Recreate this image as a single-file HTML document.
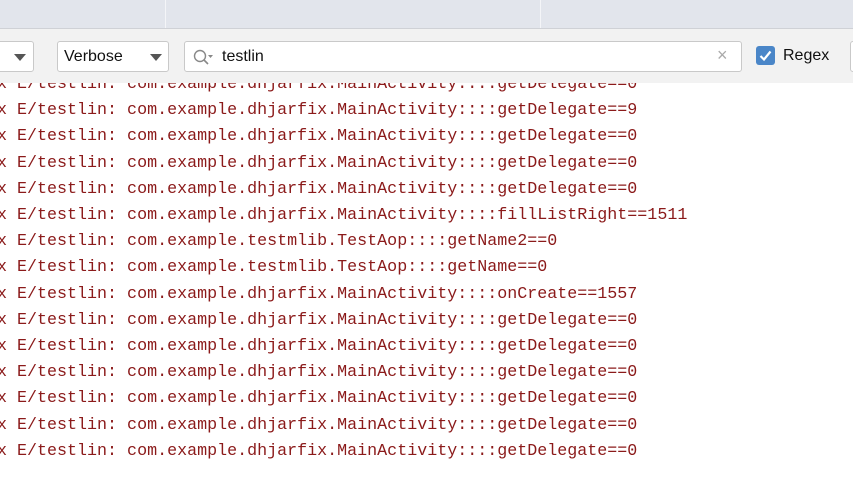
<!DOCTYPE html>
<html><head><style>
body{margin:0;width:853px;height:479px;overflow:hidden;background:#fff;position:relative;font-family:"Liberation Sans",sans-serif}
.top{position:absolute;left:0;top:0;width:853px;height:28px;background:#e2e5ec;border-bottom:1px solid #cfd1d6;z-index:2}
.top i{position:absolute;top:0;width:1px;height:28px;background:#f4f5f8}
.tb{position:absolute;left:0;top:29px;width:853px;height:54px;background:#f2f2f2;z-index:2}
.box{position:absolute;background:#fff;border:1px solid #c9c9c9;border-radius:3px;box-sizing:border-box}
.arr{position:absolute;width:0;height:0;border-left:6px solid transparent;border-right:6px solid transparent;border-top:7px solid #555}
.log{position:absolute;left:-3px;top:72px;font-family:"Liberation Mono",monospace;font-size:16.68px;line-height:26.2px;color:#8b1a1a;white-space:pre;z-index:1}
</style></head><body>
<div class="top"><i style="left:165px"></i><i style="left:540px"></i></div>
<div class="tb">
 <div class="box" style="left:-10px;top:12px;width:44px;height:31px"><div class="arr" style="left:23px;top:12px"></div></div>
 <div class="box" style="left:57px;top:12px;width:112px;height:31px"><span style="position:absolute;left:6px;top:6px;font-size:16px;color:#111">Verbose</span><div class="arr" style="left:92px;top:12px"></div></div>
 <div class="box" style="left:184px;top:12px;width:558px;height:31px">
  <svg style="position:absolute;left:7px;top:6px" width="24" height="18" viewBox="0 0 24 18"><circle cx="8" cy="8" r="5.5" fill="none" stroke="#888" stroke-width="1.4"/><line x1="12" y1="12" x2="16" y2="16" stroke="#888" stroke-width="1.6"/><path d="M16 7h5l-2.5 3z" fill="#888"/></svg>
  <span style="position:absolute;left:37px;top:6px;font-size:16px;color:#111">testlin</span>
  <span style="position:absolute;left:532px;top:3px;font-size:18px;color:#aaa">×</span>
 </div>
 <div style="position:absolute;left:756px;top:17px;width:19px;height:19px;background:#4a86c8;border-radius:3px"><svg width="19" height="19"><path d="M4.5 10l3.5 3.5 6.5-8" fill="none" stroke="#fff" stroke-width="2.2"/></svg></div>
 <span style="position:absolute;left:783px;top:18px;font-size:16px;color:#111">Regex</span>
 <div class="box" style="left:850px;top:12px;width:20px;height:31px"></div>
</div>
<div class="log">x E/testlin: com.example.dhjarfix.MainActivity::::getDelegate==0
x E/testlin: com.example.dhjarfix.MainActivity::::getDelegate==9
x E/testlin: com.example.dhjarfix.MainActivity::::getDelegate==0
x E/testlin: com.example.dhjarfix.MainActivity::::getDelegate==0
x E/testlin: com.example.dhjarfix.MainActivity::::getDelegate==0
x E/testlin: com.example.dhjarfix.MainActivity::::fillListRight==1511
x E/testlin: com.example.testmlib.TestAop::::getName2==0
x E/testlin: com.example.testmlib.TestAop::::getName==0
x E/testlin: com.example.dhjarfix.MainActivity::::onCreate==1557
x E/testlin: com.example.dhjarfix.MainActivity::::getDelegate==0
x E/testlin: com.example.dhjarfix.MainActivity::::getDelegate==0
x E/testlin: com.example.dhjarfix.MainActivity::::getDelegate==0
x E/testlin: com.example.dhjarfix.MainActivity::::getDelegate==0
x E/testlin: com.example.dhjarfix.MainActivity::::getDelegate==0
x E/testlin: com.example.dhjarfix.MainActivity::::getDelegate==0</div>
</body></html>
